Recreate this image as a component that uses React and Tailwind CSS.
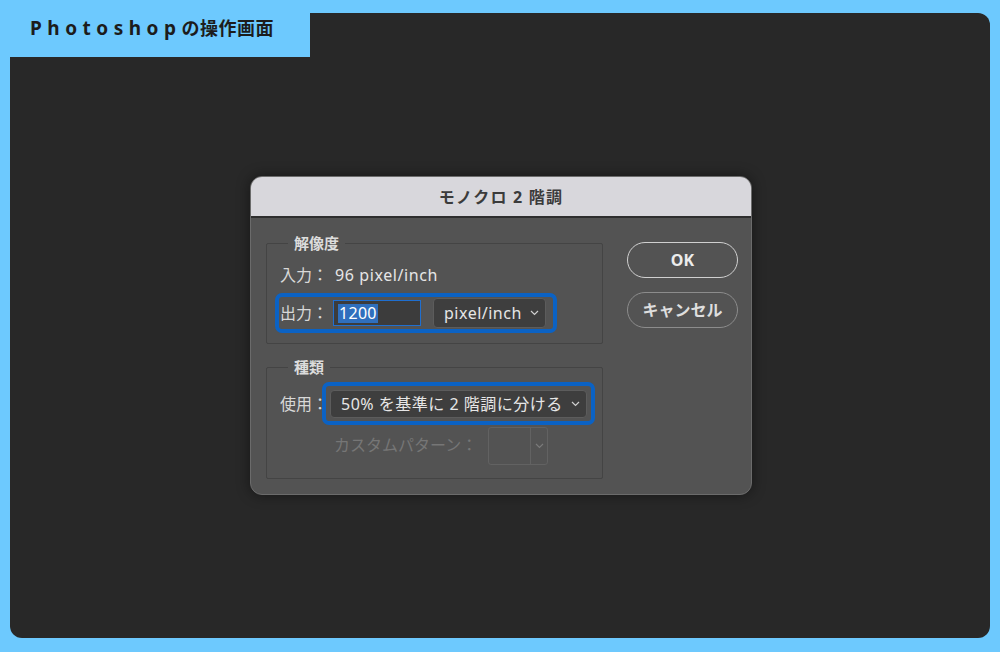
import React from 'react';

const font = { fontFamily: '"Noto Sans", "Noto Sans CJK JP", sans-serif' };

function Chevron({ className = '' }) {
  return (
    <svg width="9" height="6" viewBox="0 0 9 6" className={className}>
      <polyline points="1,1 4.5,4.5 8,1" fill="none" stroke="currentColor" strokeWidth="1.2" />
    </svg>
  );
}

export default function App() {
  return (
    <div className="relative w-[1000px] h-[652px] bg-[#6dc9fe] pt-[13px] pb-[14px] px-[10px]" style={font}>
      <div className="h-full bg-[#282828] rounded-[12px] flex justify-center pt-[163px] pl-[2px]">
        {/* dialog */}
        <div className="w-[502px] h-[319px] rounded-[12px] border border-[#6b6b6b] overflow-hidden bg-[#535353] shadow-[0_0_14px_rgba(0,0,0,0.45)] flex flex-col">
          <div className="h-[41px] shrink-0 bg-[#d8d7dc] border-b-2 border-[#2e2e2e] flex items-center justify-center text-[16px] font-bold text-[#3b3b3b] tracking-[1.2px]">
            モノクロ 2 階調
          </div>

          <div className="flex pl-[15px] pt-[15px] text-[16px] text-[#e6e6e6]">
            <div className="flex flex-col w-[337px]">
              <fieldset className="h-[111px] border border-[#444444] rounded-[2px]">
                <legend className="ml-[21px] px-[6px] text-[15px] font-semibold leading-[20px] text-[#dcdcdc]">解像度</legend>
                <div className="pt-[12px] pl-[13px] leading-[20px] flex items-center">
                  <span className="text-[#d8d8d8]">入力：</span>
                  <span className="ml-[7px] tracking-[0.6px]">96 pixel/inch</span>
                </div>
                <div className="mt-[8px] ml-[8px] w-[282px] h-[40px] border-4 border-[#0b62c4] rounded-[7px] flex items-center pl-[1px]">
                  <span className="text-[#d8d8d8] leading-[20px]">出力：</span>
                  <div className="ml-[5px] w-[88px] h-[26px] border border-[#1f6fd0] bg-[#3c3c3c] flex items-center pl-[4px]">
                    <span className="bg-[#2f6fbd] text-white leading-[19px] px-[1px] tracking-[0.3px]">1200</span>
                  </div>
                  <div className="ml-[12px] w-[113px] h-[30px] rounded-[4px] border border-[#5c5c5c] bg-[#3e3e3e] flex items-center justify-between pl-[10px] pr-[6px]">
                    <span className="tracking-[0.5px]">pixel/inch</span>
                    <Chevron className="text-[#cfcfcf]" />
                  </div>
                </div>
              </fieldset>

              <fieldset className="mt-[13px] h-[122px] border border-[#444444] rounded-[2px]">
                <legend className="ml-[21px] px-[6px] text-[15px] font-semibold leading-[20px] text-[#dcdcdc]">種類</legend>
                <div className="mt-[5px] flex items-center">
                  <span className="pl-[13px] w-[55px] text-[#d8d8d8] leading-[20px] whitespace-nowrap">使用：</span>
                  <div className="w-[273px] h-[43px] border-4 border-[#0b62c4] rounded-[7px] pl-[4px] flex items-center">
                    <div className="w-[257px] h-[28px] rounded-[4px] border border-[#5c5c5c] bg-[#3e3e3e] flex items-center justify-between pl-[10px] pr-[6px]">
                      <span className="tracking-[0.5px] whitespace-nowrap">50% を基準に 2 階調に分ける</span>
                      <Chevron className="text-[#cfcfcf]" />
                    </div>
                  </div>
                </div>
                <div className="mt-[2px] flex items-start">
                  <span className="ml-[67px] mt-[8px] text-[#767676] leading-[20px] whitespace-nowrap">カスタムパターン：</span>
                  <div className="ml-[11px] w-[60px] h-[38px] rounded-[3px] border border-[#626262] flex">
                    <div className="w-[42px] border-r border-[#626262]" />
                    <div className="flex-1 flex items-center justify-center">
                      <Chevron className="text-[#7a7a7a]" />
                    </div>
                  </div>
                </div>
              </fieldset>
            </div>

            <div className="ml-[24px] pt-[9px] flex flex-col gap-[14px]">
              <button className="w-[111px] h-[36px] rounded-full border-[1.5px] border-[#d0d0d0] text-[16px] font-bold text-[#ececec] flex items-center justify-center">
                OK
              </button>
              <button className="w-[111px] h-[36px] rounded-full border-[1.5px] border-[#8c8c8c] text-[16px] font-bold text-[#dedede] flex items-center justify-center">
                キャンセル
              </button>
            </div>
          </div>
        </div>
      </div>

      <div className="absolute left-0 top-0 w-[310px] h-[57px] bg-[#6dc9fe] flex items-center pl-[30px] font-bold text-[#1c1c1c]">
        <span className="text-[19px] tracking-[5.5px]">Photoshop</span>
        <span className="text-[18px] tracking-[0.5px]">の操作画面</span>
      </div>
    </div>
  );
}
